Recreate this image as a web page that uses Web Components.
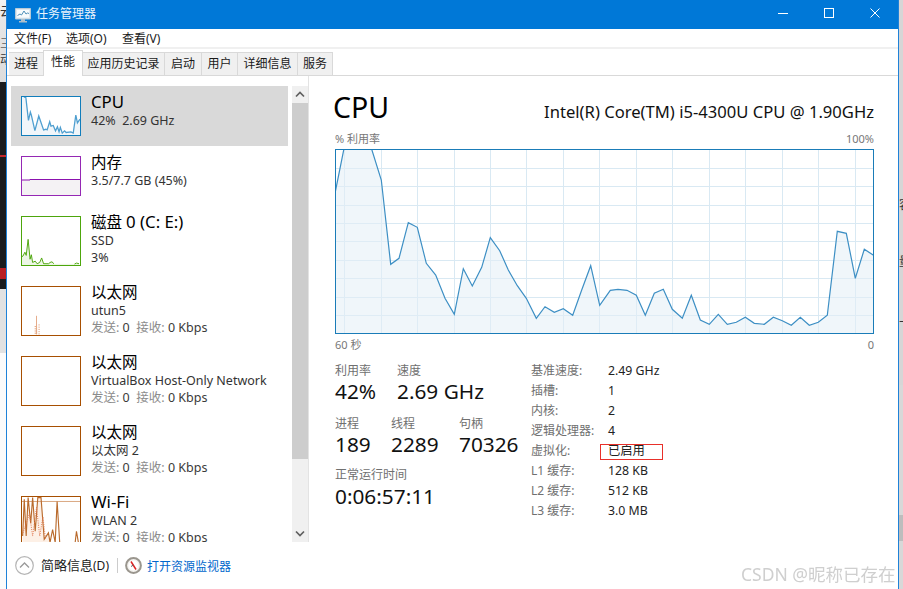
<!DOCTYPE html>
<html lang="zh-CN"><head><meta charset="utf-8"><title>任务管理器</title>
<style>
html,body{margin:0;padding:0;width:903px;height:589px;overflow:hidden;background:#fff}
body{font:12px "Noto Sans","Noto Sans CJK SC",sans-serif;color:#1a1a1a}
</style></head><body>
<tm-desktop>
  <tm-window>
    <tm-titlebar slot="title" label="任务管理器"></tm-titlebar>
    <tm-menu slot="menu"></tm-menu>
    <tm-tabs slot="tabs"></tm-tabs>
    <tm-sidebar slot="side">
      <tm-item kind="cpu" name="CPU"><span>42%&nbsp; 2.69 GHz</span></tm-item>
      <tm-item kind="mem" name="内存"><span>3.5/7.7 GB (45%)</span></tm-item>
      <tm-item kind="disk" name="磁盘 0 (C: E:)"><span>SSD</span><span>3%</span></tm-item>
      <tm-item kind="eth1" name="以太网"><span>utun5</span><tm-rate></tm-rate></tm-item>
      <tm-item kind="eth" name="以太网"><span>VirtualBox Host-Only Network</span><tm-rate></tm-rate></tm-item>
      <tm-item kind="eth" name="以太网"><span>以太网 2</span><tm-rate></tm-rate></tm-item>
      <tm-item kind="wifi" name="Wi-Fi"><span>WLAN 2</span><tm-rate></tm-rate></tm-item>
    </tm-sidebar>
    <tm-perf slot="main"></tm-perf>
    <tm-footer slot="foot"></tm-footer>
  </tm-window>
</tm-desktop>
<script>
const def=(name,html,init)=>customElements.define(name,class extends HTMLElement{
  connectedCallback(){ if(this.shadowRoot) return; const r=this.attachShadow({mode:'open'}); r.innerHTML=typeof html==='function'?html(this):html; }
});

def('tm-desktop',`<style>
:host{display:flex;position:relative;width:903px;height:589px;overflow:hidden}
.l,.r{display:flex;flex-direction:column;flex:none;overflow:hidden;font-size:12px;color:#333;line-height:16px}
.l{width:6px}.r{width:4px}
.l div,.r div{flex:none;overflow:hidden;white-space:nowrap}
.wm{position:absolute;left:741px;top:562px;font-size:17.5px;line-height:24px;color:#cfcfcf;white-space:nowrap;filter:blur(.35px)}
</style>
<div class="l">
  <div style="height:82px;background:linear-gradient(#f4f4f4,#e6e6e6 25%,#dcdcdc);padding-top:4px;box-sizing:border-box">云<br><br><span style="color:#777">三</span><br>动</div>
  <div style="height:207px;background:#1b1b1d;box-sizing:border-box">
    <div style="height:73px"></div><div style="height:2px;background:#c2252a"></div><div style="height:111px"></div><div style="height:11px;background:#b81e22"></div></div>
  <div style="height:64px;background:#e2e2e2"></div>
  <div style="flex:1;background:#fbfbfb"></div>
</div>
<slot></slot>
<div class="r">
  <div style="height:197px;background:#d6d6d6"></div>
  <div style="height:57px;background:#d6d6d6">容</div>
  <div style="height:65px;background:#d6d6d6">量</div>
  <div style="height:66px;background:#d6d6d6">下</div>
  <div style="height:130px;background:#d8d8d8"></div>
  <div style="height:26px;background:#bdbdbd"></div>
  <div style="flex:1;background:#d8d8d8"></div>
</div>
<div class="wm">CSDN @昵称已存在</div>`);

def('tm-window',`<style>
:host{display:flex;flex-direction:column;flex:1;min-width:0;height:589px;box-sizing:border-box;background:#fff;border-left:1px solid #1f82d8;border-right:1px solid #1f82d8}
.body{display:flex;height:466px;flex:none}
</style>
<slot name="title"></slot><slot name="menu"></slot><slot name="tabs"></slot>
<div class="body"><slot name="side"></slot><slot name="main"></slot></div>
<slot name="foot"></slot>`);

def('tm-titlebar',el=>`<style>
:host{display:flex;align-items:center;height:29px;background:#0078d7;color:#eaf4fc;flex:none}
svg{display:block;flex:none}
.ic{margin:1px 6px 0 8px}
.t{flex:1;font-size:12px;line-height:25px;height:27px;margin-left:-1px}
.b{width:46px;height:29px;display:flex;align-items:center;justify-content:center}
</style>
<svg class="ic" width="16" height="16" viewBox="0 0 16 16"><path d="M.5 1.500h15v10.500H.5z" fill="#dfe9f1" stroke="#b9cad6"/><path d="M2 3h12v7.500H2z" fill="#f8fbfd"/><path d="M2.500 8.500l2.500-1.500 1.500 1 2.500-4 2 3 1.500-1 1.500.5" fill="none" stroke="#4f8fb8"/><path d="M6 12h4v2h2v1.500H4V14h2z" fill="#aebfcb"/></svg>
<div class="t">${el.getAttribute('label')}</div>
<div class="b" style="margin-top:-3px"><svg width="10" height="1"><rect width="10" height="1" fill="#fff"/></svg></div>
<div class="b" style="margin-top:-3px"><svg width="10" height="10"><rect x=".5" y=".5" width="9" height="9" fill="none" stroke="#fff"/></svg></div>
<div class="b" style="margin-top:-3px"><svg width="10" height="10"><path d="M.5.5l9 9M9.500.5l-9 9" stroke="#fff" fill="none"/></svg></div>`);

def('tm-menu',`<style>
:host{display:flex;height:18px;flex:none;padding-left:7px;line-height:20px;font-size:12px;border-bottom:2px solid #f0f0f0;color:#1a1a1a}
span{white-space:nowrap}
</style>
<span style="width:52px">文件(F)</span><span style="width:56px">选项(O)</span><span>查看(V)</span>`);

def('tm-tabs',`<style>
:host{display:flex;align-items:flex-end;height:27px;flex:none;padding:0 0 0 2px;box-sizing:border-box;border-bottom:1px solid #d9d9d9;font-size:12px;color:#1a1a1a}
div{box-sizing:border-box;height:23px;line-height:21px;text-align:center;background:#f0f0f0;border:1px solid #d9d9d9;border-bottom:0;border-left:0;flex:none}
div:first-child{border-left:1px solid #d9d9d9}
div.on{height:26px;line-height:22px;background:#fff;border-left:1px solid #d9d9d9;margin:0 0 -1px -1px;position:relative;padding-bottom:1px}
</style>
<div style="width:35px">进程</div><div class="on" style="width:40px">性能</div><div style="width:82px">应用历史记录</div><div style="width:37px">启动</div><div style="width:36px">用户</div><div style="width:60px">详细信息</div><div style="width:35px">服务</div>`);

def('tm-sidebar',`<style>
:host{display:flex;width:302px;flex:none;box-sizing:border-box;padding:10px 0 0 4px;border-right:1px solid #e3e3e3;height:466px}
.list{width:277px;overflow:hidden;flex:none;display:flex;flex-direction:column}
.sb{width:16px;margin-left:4px;flex:none;background:#f0f0f0;display:flex;flex-direction:column}
.a{height:17px;display:flex;align-items:center;justify-content:center;flex:none}
.th{height:356px;background:#cdcdcd;flex:none}
.tr{flex:1}
</style>
<div class="list"><slot></slot></div>
<div class="sb">
 <div class="a"><svg width="10" height="7"><path d="M1 5.500l4-4 4 4" fill="none" stroke="#606060" stroke-width="1.700"/></svg></div>
 <div class="th"></div><div class="tr"></div>
 <div class="a"><svg width="10" height="7"><path d="M1 1.500l4 4 4-4" fill="none" stroke="#606060" stroke-width="1.700"/></svg></div>
</div>`);

const thumbs={
 cpu:{h:40,c:'#117dbb',svg:`<svg viewBox="18 18 180 120" width="58" height="38" preserveAspectRatio="none"><path d="M18 138V18H28L38 92 44 66 47 75 58 124 70 78 85 122 92 120 96 122 104 96 108 110 115 108 122 125 128 112 133 128 137 114 143 132 150 125 155 130 170 128 177 132 185 75 190 100 198 88V138Z" fill="#f1f6fa"/><path d="M24 18L30 20 38 92 44 66 47 75 58 124 70 78 85 122 92 120 96 122 104 96 108 110 115 108 122 125 128 112 133 128 137 114 143 132 150 125 155 130 170 128 177 132 185 75 190 100 198 88" fill="none" stroke="#4f9fd0" stroke-width="4"/></svg>`},
 mem:{h:40,c:'#9528b4',svg:`<svg viewBox="0 0 58 38" width="58" height="38"><path d="M0 23H8V22.500H58V38H0Z" fill="#f4f2f4"/><path d="M0 23H8V22.500H58" fill="none" stroke="#8b12ae"/></svg>`},
 disk:{h:50,c:'#4da60c',svg:`<svg viewBox="63 198 180 150" width="58" height="48" preserveAspectRatio="none"><path d="M63 348V320L66 320 72 308 76 318 82 268 88 330 92 316 96 340 104 336 110 344 118 340 124 326 130 344 146 344 150 340 156 338 162 344H240V348Z" fill="#edf6e6"/><path d="M63 322L66 320 72 308 76 318 82 268 88 330 92 316 96 340 104 336 110 344 118 340 124 326 130 344 146 344 150 340 156 338 162 344M226 345L232 342 240 344" fill="none" stroke="#4da60c" stroke-width="3"/></svg>`},
 eth1:{h:50,c:'#a74f01',svg:`<svg viewBox="63 408 180 150" width="58" height="48" preserveAspectRatio="none"><path d="M104 556L108 498 112 556Z" fill="#fbeee4"/><path d="M108 498V556" stroke="#e09a72" stroke-width="2.500"/><path d="M104 530V556M116 525V556" stroke="#dd8a5c" stroke-width="3" stroke-dasharray="3 4"/></svg>`},
 eth:{h:50,c:'#a74f01',svg:''},
 wifi:{h:50,c:'#a74f01',svg:`<svg viewBox="63 438 180 150" width="58" height="48" preserveAspectRatio="none"><path d="M65 590V560L70 445 76 560 82 440 90 520 96 440 104 545 112 440 122 440 132 570 145 550 150 590Z" fill="#fdf0e6"/><path d="M63 452H243" stroke="#d8a57e" stroke-width="3"/><path d="M65 560L70 445 76 560 82 440 90 520 96 440 104 545 112 440 122 440 132 570 145 550 150 580 158 540 166 580 172 452 180 580M228 580L232 545 238 580" fill="none" stroke="#b96a2c" stroke-width="3.500"/><path d="M66 550L76 520 86 490 96 560 108 470 118 560 128 500 136 570" fill="none" stroke="#e0734a" stroke-width="3" stroke-dasharray="3 4"/></svg>`}
};
def('tm-item',el=>{const k=el.getAttribute('kind'),t=thumbs[k],on=k==='cpu';
const nm=el.getAttribute('name').replace(/[\x21-\x7e][\x20-\x7e]*/g,m=>`<span class="la">${m}</span>`);
return `<style>
:host{display:flex;flex:none;box-sizing:border-box;padding:10px;${on?'background:#d9d9d9;':''}gap:10px;height:${t.h+20}px}
.g{flex:none;box-sizing:border-box;width:60px;height:${t.h}px;border:1px solid ${t.c};background:#fff;overflow:hidden}
svg{display:block}
.x{margin-top:-4px;min-width:0;white-space:nowrap}
.n{font-size:15.500px;line-height:20px;height:20px;color:#000}
.la{font-size:16.800px}
.s{font-size:12.500px;line-height:17px;color:#333}
::slotted(span),::slotted(tm-rate){display:block}
</style><div class="g">${t.svg}</div><div class="x"><div class="n">${nm}</div><div class="s"><slot></slot></div></div>`});

def('tm-rate',`<style>:host{display:block;color:#3a3a3a}i{font-style:normal;color:#8c8c8c}</style><i>发送:</i> 0&nbsp; <i>接收:</i> 0 Kbps`);

const pts="335,193.300 344.300,147 353,142 362,142 371.700,149.300 381.300,180 390.700,264.300 399,258.300 408.300,222.700 417.300,227.300 426.300,263.300 435.700,275 445,298.300 454.300,314.300 463.300,268.700 472.300,286 481.700,267.300 490.300,237.700 499.700,250.700 508.300,270 517.300,285.700 526.300,298.300 536.300,318.300 545,306.700 554.300,312.300 563.300,308.700 572.700,315.300 581.700,290 590.700,265.700 599.700,305.300 610.300,290.300 618,289.300 627,290.300 636.300,295.300 645.300,315.300 654.300,293.300 663.300,289.300 672.300,309.300 682.300,318.300 691.300,295.300 700.300,320 709.300,324.300 718.300,314.300 727.300,324.300 736.300,322.300 745.300,317.300 754.300,323.300 764.300,324.300 773.300,317.300 782.300,320.700 791.300,325.300 800.300,317.300 809.300,325.300 818.300,322.300 827.300,315.300 837.300,231.300 846.300,233.300 855.300,278.300 864.300,249.300 873.500,255.300";
const vx=[344,381,417,454,490,526,563,599,636,672,709,745,782,818,855], hy=[168,186,205,223,241,260,278,297,315];
def('tm-chart',`<style>
:host{display:block;width:539px;height:185px;flex:none}
svg{display:block}
</style>
<svg width="539" height="185" viewBox="335 149 539 185">
<g stroke="#d9e9f3" shape-rendering="crispEdges">
${vx.map(x=>`<path d="M${x+.5} 149V334"/>`).join('')}
${hy.map(y=>`<path d="M335 ${y+.5}H874"/>`).join('')}
</g>
<polygon points="335,334 ${pts} 874,334" fill="#e4eef6" fill-opacity=".55"/>
<polyline points="${pts}" fill="none" stroke="#3d8fc4" stroke-width="1.200"/>
<rect x="335.500" y="149.500" width="538" height="184" fill="none" stroke="#1a7cb8"/>
</svg>`);

def('tm-stat',el=>`<style>
:host{display:block;flex:none}
.l{font-size:12px;line-height:15px;color:#707070;white-space:nowrap}
.v{font-size:20.800px;line-height:var(--vh,26px);margin:0 0 1px;color:#111;white-space:nowrap}
</style><div class="l">${el.getAttribute('label')}</div><div class="v">${el.getAttribute('value')}</div>`);

def('tm-spec',el=>`<style>
:host{display:flex;height:20px;line-height:20px;font-size:12px;position:relative}
.l{width:77px;color:#707070;flex:none;white-space:nowrap}
.v{color:#222;white-space:nowrap;font-size:12.300px}
.box{position:absolute;left:69px;top:3px;width:63px;height:16px;box-sizing:border-box;border:1px solid #e8302a}
</style><div class="l">${el.getAttribute('label')}</div><div class="v">${el.getAttribute('value')}</div>${el.hasAttribute('mark')?'<div class="box"></div>':''}`);

def('tm-perf',`<style>
:host{display:block;flex:1;min-width:0;box-sizing:border-box;padding:13px 24px 0 26px}
.hd{display:flex;justify-content:space-between;align-items:baseline;height:36px;line-height:36px;margin-left:-2px}
.cpu{font-size:28.500px;color:#000}
.m{font-size:16.600px;color:#111;white-space:nowrap}
.cap{display:flex;justify-content:space-between;font-size:11px;line-height:14px;color:#777;height:14px;margin:6.500px 0 3.500px}
.cap.b{margin:3px 0 0;height:16px;line-height:16px}
.st{display:flex;margin-top:10px}
.lft{width:196px;flex:none}
.r{display:flex}
.rgt{width:340px;margin-top:-2px}
</style>
<div class="hd"><span class="cpu">CPU</span><span class="m">Intel(R) Core(TM) i5-4300U CPU @ 1.90GHz</span></div>
<div class="cap"><span>% 利用率</span><span>100%</span></div>
<tm-chart></tm-chart>
<div class="cap b"><span>60 秒</span><span>0</span></div>
<div class="st">
 <div class="lft">
  <div class="r"><tm-stat style="width:62px" label="利用率" value="42%"></tm-stat><tm-stat label="速度" value="2.69 GHz"></tm-stat></div>
  <div class="r" style="margin-top:11px"><tm-stat style="width:56px" label="进程" value="189"></tm-stat><tm-stat style="width:68px" label="线程" value="2289"></tm-stat><tm-stat label="句柄" value="70326"></tm-stat></div>
  <div class="r" style="margin-top:9px;--vh:28px"><tm-stat label="正常运行时间" value="0:06:57:11"></tm-stat></div>
 </div>
 <div class="rgt">
  <tm-spec label="基准速度:" value="2.49 GHz"></tm-spec>
  <tm-spec label="插槽:" value="1"></tm-spec>
  <tm-spec label="内核:" value="2"></tm-spec>
  <tm-spec label="逻辑处理器:" value="4"></tm-spec>
  <tm-spec label="虚拟化:" value="已启用" mark></tm-spec>
  <tm-spec label="L1 缓存:" value="128 KB"></tm-spec>
  <tm-spec label="L2 缓存:" value="512 KB"></tm-spec>
  <tm-spec label="L3 缓存:" value="3.0 MB"></tm-spec>
 </div>
</div>`);

def('tm-footer',`<style>
:host{display:flex;align-items:center;flex:1;padding-left:8px;box-sizing:border-box;font-size:12px;white-space:nowrap}
svg{display:block;flex:none}
.t{margin-left:7px;font-size:13px;color:#1a1a1a;line-height:18px}.t small{font-size:12px}
.sep{width:1px;height:15px;background:#ccc;margin:0 7px 0 8px;flex:none}
a{color:#0066cc;margin-left:5px;text-decoration:none}
</style>
<svg width="19" height="19" viewBox="0 0 19 19"><circle cx="9.500" cy="9.500" r="8.800" fill="#fff" stroke="#b5b5b5" stroke-width="1.200"/><path d="M5 11.500l4.500-4.500 4.500 4.500" fill="none" stroke="#9a9a9a" stroke-width="1.300"/></svg>
<div class="t">简略信息<small>(D)</small></div><div class="sep"></div>
<svg width="17" height="17" viewBox="0 0 17 17"><circle cx="8.500" cy="8.500" r="7.400" fill="#f4f2ee" stroke="#9a968e" stroke-width="2"/><circle cx="8.500" cy="8.500" r="5" fill="#fff"/><path d="M6 4.500L11 12.500" stroke="#d22" stroke-width="1.500"/><path d="M6 9.500L8.500 8" stroke="#666" stroke-width="1"/></svg>
<a>打开资源监视器</a>`);
</script>
</body></html>
